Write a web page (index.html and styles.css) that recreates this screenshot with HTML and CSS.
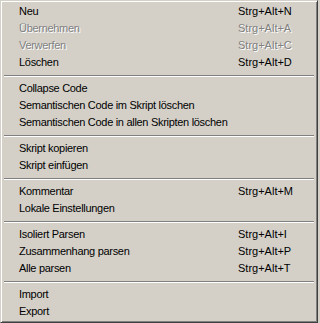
FILE: index.html
```html
<!DOCTYPE html>
<html>
<head>
<meta charset="utf-8">
<link rel="stylesheet" href="styles.css">
</head>
<body>
<div class="menu">
  <div class="item"><span class="label">Neu</span><span class="key">Strg+Alt+N</span></div>
  <div class="item disabled"><span class="label">Übernehmen</span><span class="key">Strg+Alt+A</span></div>
  <div class="item disabled"><span class="label">Verwerfen</span><span class="key">Strg+Alt+C</span></div>
  <div class="item"><span class="label">Löschen</span><span class="key">Strg+Alt+D</span></div>
  <div class="sep"></div>
  <div class="item"><span class="label">Collapse Code</span></div>
  <div class="item"><span class="label">Semantischen Code im Skript löschen</span></div>
  <div class="item"><span class="label">Semantischen Code in allen Skripten löschen</span></div>
  <div class="sep"></div>
  <div class="item"><span class="label">Skript kopieren</span></div>
  <div class="item"><span class="label">Skript einfügen</span></div>
  <div class="sep"></div>
  <div class="item"><span class="label">Kommentar</span><span class="key">Strg+Alt+M</span></div>
  <div class="item"><span class="label">Lokale Einstellungen</span></div>
  <div class="sep"></div>
  <div class="item"><span class="label">Isoliert Parsen</span><span class="key">Strg+Alt+I</span></div>
  <div class="item"><span class="label">Zusammenhang parsen</span><span class="key">Strg+Alt+P</span></div>
  <div class="item"><span class="label">Alle parsen</span><span class="key">Strg+Alt+T</span></div>
  <div class="sep"></div>
  <div class="item"><span class="label">Import</span></div>
  <div class="item"><span class="label">Export</span></div>
</div>
</body>
</html>
```
FILE: styles.css
```css
html, body {
  margin: 0;
  padding: 0;
  background: #d4d0c8;
}
.menu {
  box-sizing: border-box;
  width: 318px;
  height: 323px;
  background: #d4d0c8;
  border: 1px solid;
  border-color: #d4d0c8 #404040 #404040 #d4d0c8;
  box-shadow: inset 1px 1px 0 #ffffff, inset -1px -1px 0 #808080;
  padding: 2px;
  font-family: "Liberation Sans", Arial, sans-serif;
  font-size: 11px;
  color: #000;
}
.item {
  display: flex;
  height: 17px;
  line-height: 17px;
  padding-left: 16px;
  white-space: nowrap;
}
.label {
  flex: 1;
  letter-spacing: -0.3px;
}
.key {
  width: 77px;
  box-sizing: border-box;
}
.disabled {
  color: #808080;
  text-shadow: 1px 1px 0 #ffffff;
}
.sep {
  height: 0;
  margin: 4px 1px 3px;
  border-top: 1px solid #808080;
  border-bottom: 1px solid #ffffff;
}
```
